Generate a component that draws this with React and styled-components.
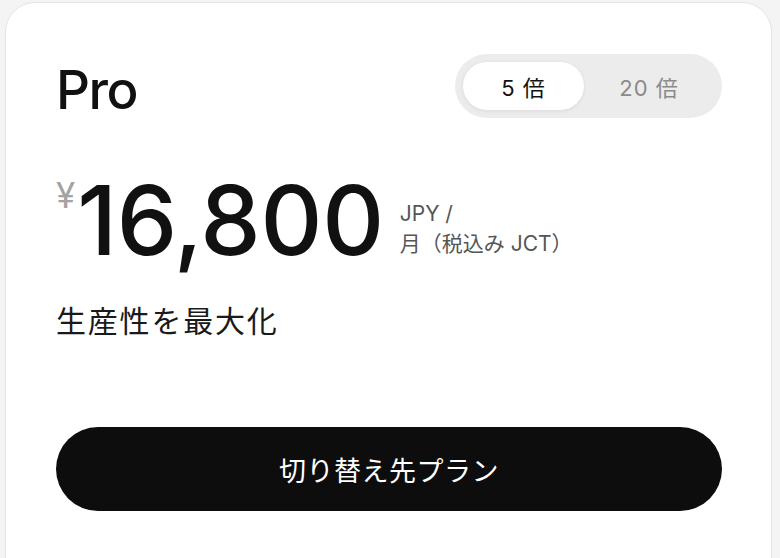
import { useState } from "react";
import styled, { createGlobalStyle } from "styled-components";

const GlobalStyle = createGlobalStyle`
    body {
        margin: 0;
        background-color: #f4f4f4;
        font-family: "Inter", "Noto Sans CJK JP", sans-serif;
        color: #111;
    }
`;

const StyledCard = styled.div`
    margin: 2px 8px 0 5px;
    background-color: #fff;
    border: 1px solid #e4e4e4;
    border-radius: 30px;
    padding: 51px 49px 60px 50px;
    min-height: 600px;
    box-sizing: border-box;
`;

const StyledHeader = styled.div`
    display: flex;
    justify-content: space-between;
    align-items: center;
    height: 64px;
`;

const StyledTitle = styled.h2`
    margin: 8px 0 0 0;
    font-size: 53px;
    font-weight: 500;
    letter-spacing: -1.5px;
    line-height: 1;
`;

const StyledToggle = styled.div`
    display: grid;
    grid-template-columns: 121px 130px;
    padding: 8px;
    border-radius: 32px;
    background-color: #ececec;
`;

const StyledOption = styled.button`
    height: 48px;
    border: none;
    border-radius: 24px;
    font-family: inherit;
    font-size: 22px;
    letter-spacing: 1px;
    cursor: pointer;
    background-color: ${(props) => (props.$active ? "#fff" : "transparent")};
    color: ${(props) => (props.$active ? "#111" : "#8a8a8a")};
    box-shadow: ${(props) => (props.$active ? "0 1px 4px rgba(0, 0, 0, 0.08)" : "none")};
`;

const StyledPriceRow = styled.div`
    display: flex;
    align-items: flex-start;
    margin-top: 58px;
`;

const StyledCurrency = styled.span`
    font-size: 35px;
    color: #a3a3a3;
    line-height: 1;
    margin-top: 2px;
    margin-right: 2px;
`;

const StyledAmount = styled.span`
    font-size: 96px;
    font-weight: 500;
    letter-spacing: -0.3px;
    line-height: 1;
    margin-top: -4px;
`;

const StyledUnit = styled.span`
    font-size: 21px;
    line-height: 30px;
    color: #555;
    margin: 23px 0 0 16px;
`;

const StyledTagline = styled.p`
    margin: 29px 0 0 0;
    font-size: 30px;
    letter-spacing: 1.8px;
    color: #1a1a1a;
`;

const StyledButton = styled.button`
    display: block;
    width: 100%;
    height: 84px;
    margin-top: 86px;
    border: none;
    border-radius: 42px;
    background-color: #0d0d0d;
    color: #fff;
    font-family: inherit;
    font-size: 27px;
    letter-spacing: 0.5px;
    cursor: pointer;
`;

const options = ["5 倍", "20 倍"];

function App() {
    const [selected, setSelected] = useState(0);

    return (
        <>
            <GlobalStyle />
            <StyledCard>
                <StyledHeader>
                    <StyledTitle>Pro</StyledTitle>
                    <StyledToggle>
                        {options.map((label, i) => (
                            <StyledOption key={label} $active={selected === i} onClick={() => setSelected(i)}>
                                {label}
                            </StyledOption>
                        ))}
                    </StyledToggle>
                </StyledHeader>
                <StyledPriceRow>
                    <StyledCurrency>¥</StyledCurrency>
                    <StyledAmount>16,800</StyledAmount>
                    <StyledUnit>
                        JPY /
                        <br />
                        月（税込み JCT）
                    </StyledUnit>
                </StyledPriceRow>
                <StyledTagline>生産性を最大化</StyledTagline>
                <StyledButton>切り替え先プラン</StyledButton>
            </StyledCard>
        </>
    );
}

export default App;
